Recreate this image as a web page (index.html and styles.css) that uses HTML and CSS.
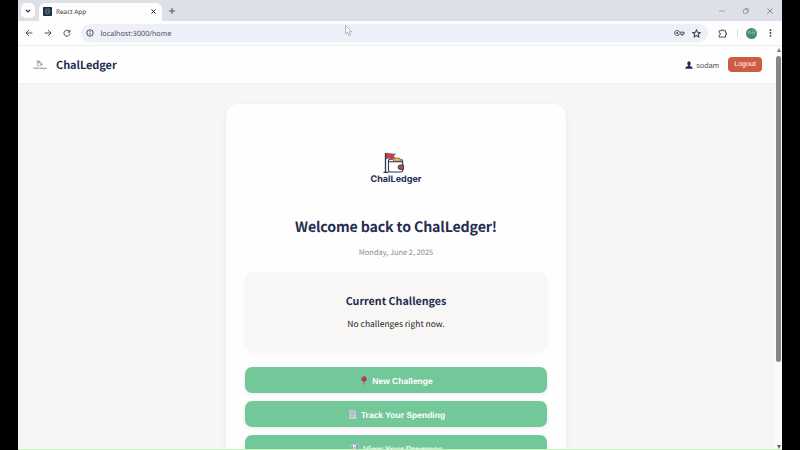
FILE: index.html
```html
<!DOCTYPE html>
<html lang="en">
<head>
<meta charset="utf-8">
<title>React App</title>
<link rel="stylesheet" href="styles.css">
</head>
<body>
<div class="window">
  <div class="tabstrip">
    <div class="chevron"><svg width="6" height="4" viewBox="0 0 6 4"><path d="M1 .8 3 2.8 5 .8" fill="none" stroke="#333" stroke-width="1.2"/></svg></div>
    <div class="tab">
      <svg class="favicon" width="9" height="9" viewBox="0 0 18 18"><rect width="18" height="18" rx="2" fill="#20252d"/><g fill="none" stroke="#5595a8" stroke-width="1"><ellipse cx="9" cy="9" rx="7" ry="2.7"/><ellipse cx="9" cy="9" rx="7" ry="2.7" transform="rotate(60 9 9)"/><ellipse cx="9" cy="9" rx="7" ry="2.7" transform="rotate(120 9 9)"/></g></svg>
      <span class="tab-title">React App</span>
      <svg width="5" height="5" viewBox="0 0 5 5"><path d="M.5.5l4 4m0-4l-4 4" stroke="#222"/></svg>
    </div>
    <svg class="plus" width="6" height="6" viewBox="0 0 6 6"><path d="M3 0v6M0 3h6" stroke="#444" stroke-width=".9"/></svg>
    <div class="controls">
      <svg width="6" height="6" viewBox="0 0 6 6"><path d="M0 3h6" stroke="#999" stroke-width=".8"/></svg>
      <svg width="6" height="6" viewBox="0 0 6 6" fill="none" stroke="#8d8f94" stroke-width=".8"><rect x=".5" y="1.6" width="3.9" height="3.9" rx=".8"/><path d="M1.8.5h2.5q1.2 0 1.2 1.2v2.5"/></svg>
      <svg width="6" height="6" viewBox="0 0 6 6"><path d="M.4.4l5.2 5.2m0-5.2L.4 5.600" stroke="#777" stroke-width=".8"/></svg>
    </div>
  </div>
  <div class="toolbar">
    <div class="nav">
      <svg width="8" height="8" viewBox="0 0 8 8"><path d="M7.300 4H1.200M3.900 1.100 1 4l2.900 2.900" class="ink"/></svg>
      <svg width="8" height="8" viewBox="0 0 8 8"><path d="M.7 4h6.100M4.100 1.100 7 4 4.100 6.900" class="ink"/></svg>
      <svg width="8" height="8" viewBox="0 0 8 8"><path d="M6.700 2.900A3 3 0 1 0 7 4.400M6.900.8v2.300H4.600" class="ink"/></svg>
    </div>
    <div class="address">
      <svg width="8" height="8" viewBox="0 0 8 8"><circle cx="4" cy="4" r="3.200" class="ink"/><path d="M4 3.600v2.200M4 2v.9" class="ink"/></svg>
      <span class="url">localhost:3000/home</span>
      <svg class="key" width="11" height="8" viewBox="0 0 11 8"><path d="M5.500 3.200A2.500 2.500 0 1 0 5.500 4.800H7.200V6H9V4.800H10V3.200Z" class="ink"/><circle cx="3.200" cy="4" r=".9" fill="#333"/></svg>
      <svg width="9" height="9" viewBox="0 0 8 8"><path d="M4 .8l1 2.100 2.300.2-1.700 1.600.5 2.300L4 5.800 1.900 7l.5-2.300L.7 3.100 3 2.900Z" class="ink"/></svg>
    </div>
    <svg class="ext" width="10" height="9" viewBox="0 0 10 9"><path d="M1.200 1.700H3.500V.9h1.800v.8h2.200v2.200h1v1.700h-1v2.500H1.200V6.100q1.300-.2 1.300-1.200T1.200 3.700Z" class="ink"/></svg>
    <span class="sep"></span>
    <span class="avatar">소담</span>
    <svg width="3" height="8" viewBox="0 0 3 8" fill="#333"><circle cx="1.500" cy="1.200" r=".9"/><circle cx="1.500" cy="4" r=".9"/><circle cx="1.500" cy="6.800" r=".9"/></svg>
  </div>
  <div class="viewport">
    <div class="page">
      <header class="header">
        <svg class="mini" width="14" height="10" viewBox="0 0 52 34"><use href="#mark"/><text x="26" y="32" class="logo-text" textLength="51">ChalLedger</text></svg>
        <span class="brand">ChalLedger</span>
        <svg class="user" width="8" height="8" viewBox="0 0 8 8" fill="#2b2460"><ellipse cx="4" cy="2.400" rx="1.700" ry="2.200"/><path d="M3.200 4h1.600v1l2 .7q.8.400.8 2H.4q0-1.600.8-2l2-.7Z"/></svg>
        <span class="name">sodam</span>
        <span class="logout">Logout</span>
      </header>
      <main class="card">
        <svg class="logo" width="52" height="34" viewBox="0 0 52 34">
          <g id="mark">
            <path d="M15.500 1v19M13.500 20.300h5" stroke="#27385a" stroke-width="1.300"/>
            <path d="M16 1.200q2.500 0 4.500 .5t5 .4l-2.200 2 1.700 1.900q-2.500.9-4.800.3t-4.200.5Z" fill="#d5423c" stroke="#493750" stroke-width=".6"/>
            <path d="M23.200 9.300a3.900 3.500 0 0 1 7.800 0Z" fill="#f2b64d" stroke="#6c5547" stroke-width=".7"/>
            <path d="M18.500 8.500V18.200q0 1.800 1.800 1.800h10.700q1.700 0 1.700-1.800v-6.800q0-1.700-1.700-1.700H20q-1.500 0-1.500-1.200t1.500-1.300h3M31 7.500q1.700 0 1.700 3" fill="none" stroke="#27385a" stroke-width="1.100"/>
            <path d="M33.500 13h-3.200a2.200 2.200 0 0 0 0 4.400h3.200Z" fill="#c84352" stroke="#303050" stroke-width=".9"/>
          </g>
          <text x="26" y="30.300" class="logo-text" textLength="51" lengthAdjust="spacingAndGlyphs">ChalLedger</text>
        </svg>
        <h1>Welcome back to ChalLedger!</h1>
        <p class="date">Monday, June 2, 2025</p>
        <section class="challenges">
          <h2>Current Challenges</h2>
          <p>No challenges right now.</p>
        </section>
        <div class="actions">
          <div class="action"><svg width="8" height="9" viewBox="0 0 8 9"><path d="M4 4v4.800" stroke="#8b7180" stroke-width=".9"/><circle cx="4" cy="2.900" r="2.600" fill="#b52d59"/><circle cx="3.300" cy="1.900" r=".7" fill="#e27c9b"/></svg><span>New Challenge</span></div>
          <div class="action"><svg width="9" height="9" viewBox="0 0 9 9"><path d="M1.500.5H7.700V7.500h.8v1.200H.8V7.500h.7Z" fill="#d2d1e3"/><path d="M2.700 2h3.800M2.700 3.500h3.800M2.700 5h3.800M2.700 6.500h3" stroke="#9294b4" stroke-width=".6"/></svg><span>Track Your Spending</span></div>
          <div class="action"><svg width="9" height="9" viewBox="0 0 9 9"><path d="M.4.4h8.200v8.200H.4Z" fill="#e4e1ed" stroke="#9999ab" stroke-width=".4"/><path d="M2 1.500V8" stroke="#42a668" stroke-width="1.300"/><path d="M4.500 3v5" stroke="#d6a656" stroke-width="1.300"/><path d="M7 1v7" stroke="#3978c8" stroke-width="1.300"/></svg><span>View Your Progress</span></div>
        </div>
      </main>
    </div>
    <div class="scrollbar"><i class="up"></i><i class="thumb"></i><i class="down"></i></div>
  </div>
</div>
<svg class="cursor" width="8" height="12" viewBox="0 0 8 12"><path d="M.5.5V9l2-1.800L4 10.500l1.500-.7L4.100 6.700H6.700Z" fill="#fff" stroke="#a0a1a6" stroke-width=".8"/></svg>
</body>
</html>
```
FILE: styles.css
```css
* { box-sizing: border-box; margin: 0; }
body { width: 800px; height: 450px; padding: 0 18px; overflow: hidden; background: #000; font-family: "Noto Sans CJK KR", sans-serif; text-rendering: geometricPrecision; }
svg { flex: none; display: block; }
.ink { fill: none; stroke: #3c3e43; stroke-width: .9; }
.window { height: 450px; display: flex; flex-direction: column; background: #fdfdfd; border-bottom: 1px solid #c2f5b8; white-space: nowrap; }
.tabstrip { height: 21px; display: flex; align-items: center; background: #dde0e7; padding: 0 9px 0 3px; flex: none; }
.chevron { width: 14px; height: 15px; border-radius: 5px; background: #fdfdfd; display: grid; place-items: center; }
.tab { width: 123px; height: 18px; align-self: flex-end; margin-left: 4px; padding: 0 6px 2px 4px; border-radius: 6px 6px 0 0; background: #fdfdfd; display: flex; align-items: center; }
.tab-title { flex: 1; margin-left: 4px; font: 6.400px "Noto Sans", sans-serif; color: #333; }
.plus { margin-left: 7px; }
.controls { display: flex; gap: 18px; margin-left: auto; }
.toolbar { height: 25px; flex: none; display: flex; align-items: center; padding: 0 10px 0 7px; border-bottom: 1px solid #eceef1; background: #fdfdfd; }
.nav { display: flex; gap: 11px; }
.address { width: 628px; height: 18px; margin-left: 10px; padding: 0 7px 0 5px; display: flex; align-items: center; border-radius: 9px; background: #edf0f8; }
.url { margin: 1px 0 0 6.500px; font: 7.200px "Noto Sans", sans-serif; color: #4b4e54; }
.key { margin: 0 7px 0 auto; }
.ext { margin-left: 10px; }
.sep { width: 1px; height: 8px; margin-left: 9px; background: #d5d9e3; }
.avatar { width: 11px; height: 11px; margin: 0 12px 0 8px; border-radius: 50%; background: #438a72; color: #c4ded5; font-size: 4.500px; line-height: 10px; text-align: center; }
.viewport { flex: 1; min-height: 0; display: flex; }
.page { width: 757px; overflow: hidden; background: #f7f6f4; }
.header { height: 37px; display: flex; align-items: center; padding: 0 13px 0 15px; background: #fefefe; box-shadow: 0 0 2px #00000018; color: #252d50; }
.mini { opacity: .75; }
.brand { margin-left: 9px; font-size: 11px; line-height: 18px; letter-spacing: -.08px; }
.brand, h1, h2 { font-weight: 700; }
.user { margin-left: auto; }
.name { margin: 2px 9px 0 3px; font: 7.600px "Liberation Sans", sans-serif; color: #555; }
.logout { width: 34px; height: 15px; border-radius: 4px; background: #cd5c43; color: #fff; font: 7px/15px "Liberation Sans", sans-serif; text-align: center; }
.card { width: 340px; height: 380px; margin: 21px auto 0 208px; padding: 48px 19px 0; border-radius: 12px; background: #fefefe; box-shadow: 0 2px 7px #0000000d; text-align: center; }
.logo { margin: 0 auto; }
.logo-text { font: 700 9px Inter, sans-serif; fill: #252e52; text-anchor: middle; }
h1 { margin-top: 30px; color: #252d50; font-size: 14.200px; line-height: 22px; letter-spacing: -.14px; }
.date { margin-top: 9px; color: #8c8c8c; font-size: 7.450px; line-height: 12px; }
.challenges { height: 80px; margin-top: 13px; padding-top: 21px; border-radius: 9px; background: #f8f7f6; box-shadow: 0 1px 5px #00000009; }
h2 { color: #252d50; font-size: 10.700px; line-height: 18px; }
.challenges p { margin-top: 6px; color: #222; font-size: 8.500px; line-height: 14px; }
.actions { display: grid; gap: 8px; margin-top: 15px; }
.action { height: 26px; padding: 1px 0 0 1px; display: flex; align-items: center; justify-content: center; gap: 4px; border-radius: 7px; background: #73c89a; color: #fff; font: bold 8.500px "Liberation Sans", sans-serif; box-shadow: 0 1px 4px #00000014; }
.scrollbar { width: 7px; display: flex; flex-direction: column; align-items: center; background: #fbfbfb; }
.up, .down { border: 2.500px solid transparent; }
.up { margin-top: 2px; border-bottom: 4px solid #777; border-top: 0; }
.thumb { width: 5px; height: 306px; margin-top: 4px; border-radius: 3px; background: #858585; }
.down { margin-top: auto; border-top: 4px solid #666; border-bottom: 0; }
.cursor { position: absolute; left: 345px; top: 25px; }
```
